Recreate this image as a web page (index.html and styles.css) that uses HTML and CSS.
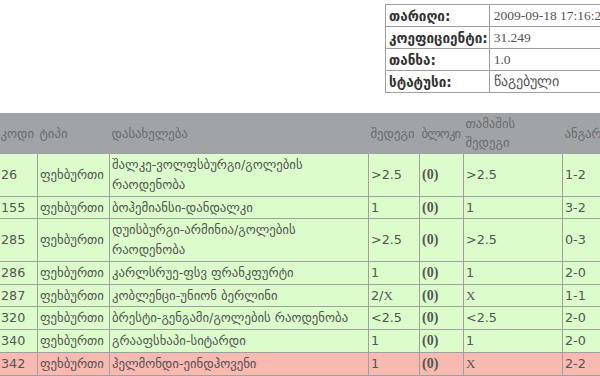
FILE: index.html
```html
<!DOCTYPE html>
<html>
<head>
<meta charset="utf-8">
<link rel="stylesheet" href="styles.css">
</head>
<body>
<div class="page">
  <table class="info">
    <tr><th>თარიღი:</th><td>2009-09-18 17:16:25</td></tr>
    <tr><th>კოეფიციენტი:</th><td>31.249</td></tr>
    <tr><th>თანხა:</th><td>1.0</td></tr>
    <tr><th>სტატუსი:</th><td>წაგებული</td></tr>
  </table>

  <table class="bets">
    <colgroup>
      <col class="c-code"><col class="c-type"><col class="c-name"><col class="c-res"><col class="c-block"><col class="c-game"><col class="c-score">
    </colgroup>
    <thead>
      <tr><th>კოდი</th><th>ტიპი</th><th>დასახელება</th><th>შედეგი</th><th class="tight">ბლოკი</th><th>თამაშის შედეგი</th><th>ანგარიში</th></tr>
    </thead>
    <tbody>
      <tr><td>26</td><td>ფეხბურთი</td><td>შალკე-ვოლფსბურგი/გოლების რაოდენობა</td><td>&gt;2.5</td><td class="blk">(0)</td><td>&gt;2.5</td><td>1-2</td></tr>
      <tr><td>155</td><td>ფეხბურთი</td><td>ბოჰემიანსი-დანდალკი</td><td>1</td><td class="blk">(0)</td><td>1</td><td>3-2</td></tr>
      <tr><td>285</td><td>ფეხბურთი</td><td>დუისბურგი-არმინია/გოლების რაოდენობა</td><td>&gt;2.5</td><td class="blk">(0)</td><td>&gt;2.5</td><td>0-3</td></tr>
      <tr><td>286</td><td>ფეხბურთი</td><td>კარლსრუე-ფსვ ფრანკფურტი</td><td>1</td><td class="blk">(0)</td><td>1</td><td>2-0</td></tr>
      <tr><td>287</td><td>ფეხბურთი</td><td>კობლენცი-უნიონ ბერლინი</td><td>2/<span class="x">X</span></td><td class="blk">(0)</td><td><span class="x">X</span></td><td>1-1</td></tr>
      <tr><td>320</td><td>ფეხბურთი</td><td>ბრესტი-გენგამი/გოლების რაოდენობა</td><td>&lt;2.5</td><td class="blk">(0)</td><td>&lt;2.5</td><td>2-0</td></tr>
      <tr><td>340</td><td>ფეხბურთი</td><td>გრააფსხაპი-სიტარდი</td><td>1</td><td class="blk">(0)</td><td>1</td><td>2-0</td></tr>
      <tr class="lost"><td>342</td><td>ფეხბურთი</td><td>ჰელმონდი-ეინდჰოვენი</td><td>1</td><td class="blk">(0)</td><td><span class="x">X</span></td><td>2-2</td></tr>
    </tbody>
  </table>
</div>
</body>
</html>
```
FILE: styles.css
```css
html, body {
  margin: 0;
  padding: 0;
  background: #fff;
  overflow: hidden;
}
body {
  font-family: "DejaVu Sans", sans-serif;
  font-size: 12.75px;
  color: #555;
}
.page {
  width: 760px;
  margin-top: 4px;
}
.info {
  margin-left: 385px;
  border-collapse: collapse;
  border: 1px solid #a0a0a0;
}
.info th, .info td {
  border: 1px solid #a0a0a0;
  height: 21px;
  text-align: left;
  vertical-align: middle;
}
.info th {
  font-weight: bold;
  font-size: 13.5px;
  color: #333;
  padding: 0 1px 0 3px;
}
.info td {
  font-family: "Liberation Serif", serif;
  font-size: 13.5px;
  color: #555;
  width: 140px;
  padding: 0 4px;
  white-space: nowrap;
}
.bets {
  margin-top: 20px;
  margin-left: -2px;
  border-collapse: collapse;
  table-layout: fixed;
  width: 760px;
}
.c-code { width: 39px; }
.c-type { width: 72px; }
.c-name { width: 259px; }
.c-res { width: 51px; }
.c-block { width: 44px; }
.c-game { width: 99px; }
.c-score { width: 196px; }
.bets th {
  background: #a0a4a7;
  color: #6a6d70;
  font-weight: normal;
  text-align: left;
  vertical-align: middle;
  height: 40px;
  padding: 0 1px 0 2px;
  line-height: 19px;
}
.bets th.tight {
  letter-spacing: -0.9px;
  white-space: nowrap;
}
.bets td {
  background: #dcfdcb;
  border: 1px solid #a0a0a0;
  padding: 1px 2px;
  line-height: 19.75px;
  vertical-align: middle;
}
.bets tr.lost td {
  background: #f7b9b0;
}
.bets td.blk {
  font-family: "Liberation Serif", serif;
  font-weight: bold;
  font-size: 14px;
}
.x {
  font-family: "Liberation Serif", serif;
  font-size: 13px;
}
```
